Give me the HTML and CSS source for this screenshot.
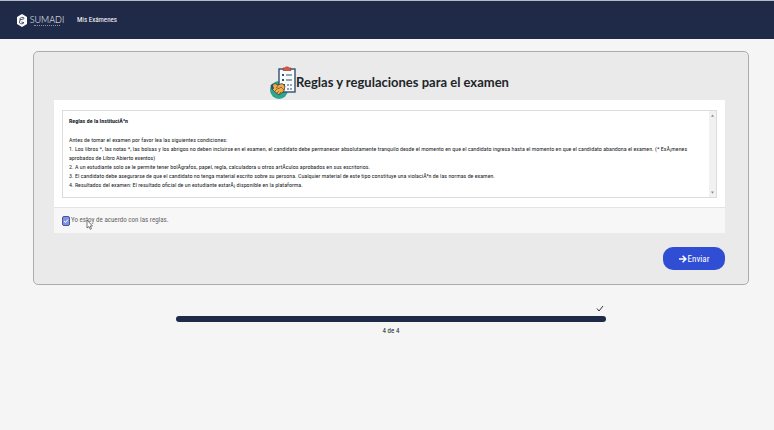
FILE: index.html
```html
<!DOCTYPE html>
<html lang="es">
<head>
  <meta charset="UTF-8">
  <meta name="viewport" content="width=device-width, initial-scale=1.0">
  <title>Sumadi</title>
  <link rel="stylesheet" href="styles.css">
</head>
<body>
  <header class="navbar">
    <a href="#" class="brand">
      <svg class="brand-icon" viewBox="0 0 10 13">
        <path d="M5 0 L10 3 V10 L5 13 L0 10 V3 Z" fill="#fff"/>
        <path d="M7.4 4.2 C5 2.2 2.2 4 3 5.8 L7 4.8 M3 5.8 L2.4 8.8 C3.4 10 6 10.4 7 8.6 L4.4 8" fill="none" stroke="#1d2848" stroke-width="0.8"/>
      </svg>
      <span class="brand-text">
        <span class="brand-name">SUMADI</span>
        <span class="brand-line"></span>
      </span>
    </a>
    <nav>
      <a href="#" class="nav-link">Mis Exámenes</a>
    </nav>
  </header>

  <main class="container">
    <form class="panel">
      <h1 class="title">
        <svg class="title-icon" viewBox="0 0 26 34">
          <circle cx="9" cy="24" r="9" fill="#2ba58d"/>
          <rect x="9" y="3" width="16" height="23" fill="#f7fbfd" stroke="#34506e" stroke-width="1.4"/>
          <path d="M13 4.5 V2 H15 C15 0.5 19 0.5 19 2 H21 V4.5 Z" fill="#e4573d" stroke="#8f3c35" stroke-width="0.7"/>
          <path d="M12 8 h2 v2 h-2z M12 13 h2 v2 h-2z M13 18 h2 v2 h-2z" fill="#34506e"/>
          <path d="M16 9 H22 M16 14 H22 M17 19 H19 M20 19 H22 M17 23 H19 M20 23 H22" stroke="#34506e" stroke-width="1.2"/>
          <path d="M2 19 L5 17.5 L8 19 L12 17.5 L15 20 L14 25 L9 29 L5 26 L2 23 Z" fill="#f1ad48" stroke="#4a3a3b" stroke-width="0.8"/>
          <path d="M8 19 L6.5 22 L9 22.5 L11 21 L14 24 M5 25 L7 23 M7 27 L9 25 M9 28 L11 26" fill="none" stroke="#4a3a3b" stroke-width="0.6"/>
          <path d="M0.5 19.5 L2.5 17.5 L4 22.5 L2 24 Z" fill="#34506e"/>
        </svg>
        <span>Reglas y regulaciones para el examen</span>
      </h1>

      <div class="card">
        <div class="card-body">
          <div class="rules">
            <div class="rules-text">
              <h2>Reglas de la InstituciÃ³n</h2>
              <p>Antes de tomar el examen por favor lea las siguientes condiciones:</p>
              <p>1. Los libros *, las notas *, las bolsas y los abrigos no deben incluirse en el examen, el candidato debe permanecer absolutamente tranquilo desde el momento en que el candidato ingresa hasta el momento en que el candidato abandona el examen. (* ExÃ¡menes aprobados de Libro Abierto exentos)</p>
              <p>2. A un estudiante solo se le permite tener bolÃ­grafos, papel, regla, calculadora u otros artÃ­culos aprobados en sus escritorios.</p>
              <p>3. El candidato debe asegurarse de que el candidato no tenga material escrito sobre su persona. Cualquier material de este tipo constituye una violaciÃ³n de las normas de examen.</p>
              <p>4. Resultados del examen: El resultado oficial de un estudiante estarÃ¡ disponible en la plataforma.</p>
            </div>
            <div class="scroll">
              <svg viewBox="0 0 4 3"><path d="M0 3 L2 0 L4 3 Z" fill="#8b8b8b"/></svg>
              <svg viewBox="0 0 4 3"><path d="M0 0 L2 3 L4 0 Z" fill="#8b8b8b"/></svg>
            </div>
          </div>
        </div>
        <div class="card-footer">
          <input type="checkbox" id="agree" checked>
          <label for="agree">Yo estoy de acuerdo con las reglas.</label>
          <svg class="cursor" viewBox="0 0 7 11">
            <path d="M1 1 V9 L3 7.5 L4.2 10.3 L5.5 9.7 L4.3 7 H6.5 Z" fill="#fff" stroke="#555" stroke-width="0.8"/>
          </svg>
        </div>
      </div>

      <div class="actions">
        <button type="submit" class="btn">
          <svg viewBox="0 0 8 8"><path d="M0 4 H7 M3.6 0.7 L7 4 L3.6 7.3" fill="none" stroke="#fff" stroke-width="1.5"/></svg>
          Enviar
        </button>
      </div>
    </form>

    <div class="progress">
      <svg class="check" viewBox="0 0 8 7"><path d="M1 3.5 L3 6 L7 1" fill="none" stroke="#333" stroke-width="1"/></svg>
      <div class="bar"></div>
      <p>4 de 4</p>
    </div>
  </main>
</body>
</html>
```
FILE: styles.css
```css
* {
  box-sizing: border-box;
}
body {
  margin: 0;
  font-family: "Roboto Condensed", Roboto, Arial, sans-serif;
  background-color: #f5f5f5;
  color: #212529;
}
h1, h2, p {
  margin: 0;
}
.navbar {
  display: flex;
  align-items: center;
  gap: 12px;
  height: 39px;
  padding: 0 17px;
  background-color: #1f2a49;
  border-top: 1px solid #b5bcc5;
}
.brand {
  display: flex;
  align-items: center;
  gap: 2px;
  color: #fff;
  text-decoration: none;
}
.brand-icon {
  flex-shrink: 0;
  width: 10px;
  height: 13px;
}
.brand-text {
  display: flex;
  flex-direction: column;
  align-items: center;
  width: 36px;
}
.brand-name {
  font-family: Lato, sans-serif;
  font-weight: 300;
  font-size: 9px;
  line-height: 11px;
}
.brand-line {
  width: 26px;
  border-top: 1px dotted #8d95aa;
}
.nav-link {
  display: block;
  padding-top: 1px;
  font-size: 7px;
  line-height: 9px;
  color: #fff;
  text-decoration: none;
}
.container {
  padding: 12px 25px 0 33px;
}
.panel {
  padding: 14px 23px 14px 20px;
  background-color: #eaeaea;
  border: 1px solid #acacac;
  border-radius: 5px;
}
.title {
  display: flex;
  justify-content: center;
  align-items: flex-start;
  font-family: Lato, sans-serif;
  font-size: 13px;
  line-height: 33px;
  font-weight: 700;
}
.title-icon {
  width: 26px;
  height: 34px;
}
.card {
  background-color: #fff;
}
.card-body {
  padding: 10px 8px 9px;
}
.rules {
  display: flex;
  justify-content: space-between;
  border: 1px solid #dcdcdc;
}
.rules-text {
  padding: 5px 1px 8px 6px;
  font-size: 6px;
  line-height: 9px;
}
.rules-text h2 {
  margin-bottom: 10px;
  font-size: 6px;
  line-height: 9px;
}
.scroll {
  display: flex;
  flex-direction: column;
  flex-shrink: 0;
  justify-content: space-between;
  align-items: center;
  width: 7px;
  padding: 3px 0;
  background-color: #f1f1f1;
}
.scroll svg {
  width: 3px;
  height: 3px;
}
.card-footer {
  position: relative;
  display: flex;
  align-items: center;
  gap: 1px;
  height: 26px;
  padding: 0 8px;
  background-color: #f7f7f7;
  border-top: 1px solid #e4e4e4;
  font-size: 7px;
  line-height: 9px;
  color: #666;
}
.card-footer input {
  appearance: none;
  width: 8px;
  height: 10px;
  margin: 0;
  border: 1px solid #4b5590;
  border-radius: 2px;
  background: #7d92e8 url("data:image/svg+xml,%3Csvg xmlns='http://www.w3.org/2000/svg' viewBox='0 0 6 6'%3E%3Cpath d='M1 3 L2.5 4.5 L5 1.5' fill='none' stroke='white'/%3E%3C/svg%3E") center / 6px 6px no-repeat;
}
.cursor {
  position: absolute;
  left: 32px;
  top: 11px;
  width: 7px;
  height: 11px;
}
.actions {
  display: flex;
  justify-content: flex-end;
  margin-top: 14px;
}
.btn {
  display: flex;
  align-items: center;
  justify-content: center;
  gap: 1px;
  width: 62px;
  height: 23px;
  padding: 0;
  border: none;
  border-radius: 10px;
  background-color: #304ed3;
  color: #fff;
  font-family: inherit;
  font-size: 9px;
  cursor: pointer;
}
.btn svg {
  width: 8px;
  height: 8px;
}
.progress {
  width: 60%;
  margin: 20px auto 0;
}
.check {
  display: block;
  width: 8px;
  height: 7px;
  margin: 0 2px 4px auto;
}
.bar {
  height: 6px;
  border-radius: 3px;
  background-color: #1f2a49;
}
.progress p {
  margin-top: 5px;
  font-size: 7px;
  line-height: 9px;
  text-align: center;
}
```
